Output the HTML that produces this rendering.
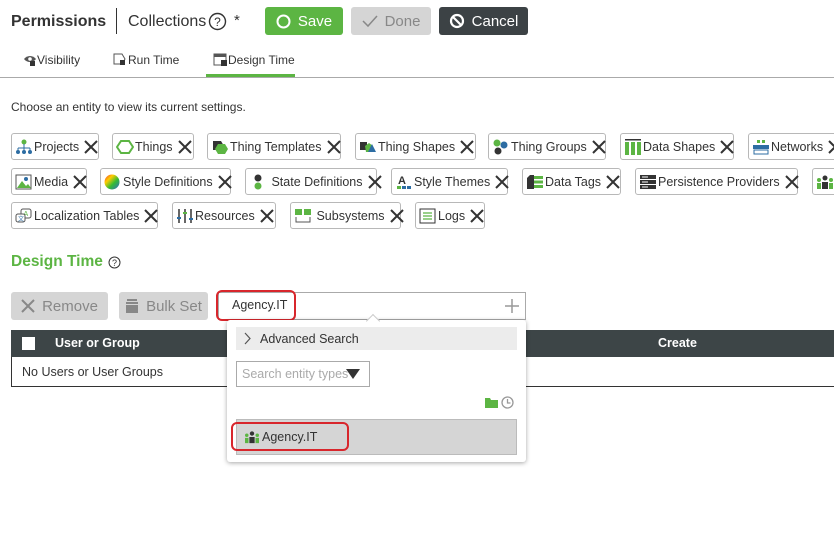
<!DOCTYPE html>
<html><head><meta charset="utf-8"><style>
*{box-sizing:border-box;margin:0;padding:0}
body{width:834px;height:556px;overflow:hidden;background:#fff;font-family:"Liberation Sans",sans-serif;color:#333;position:relative}
.a{position:absolute}
.btn{position:absolute;border-radius:3px;font-size:15px;display:flex;align-items:center;justify-content:center;gap:7px}
.chip{position:absolute;height:27px;border:1px solid #b8b8b8;border-radius:3px;font-size:12.5px;display:flex;align-items:center;padding-left:3px;gap:1px;color:#333;white-space:nowrap}
.chip .ic{width:18px;height:16px;display:inline-block;flex:none}
.chip .x{margin-left:4px;flex:none}
</style></head><body>
<div class="a" style="left:11px;top:13px;font-size:16px;font-weight:bold;color:#333">Permissions</div>
<div class="a" style="left:116px;top:8px;width:1px;height:26px;background:#333"></div>
<div class="a" style="left:128px;top:13px;font-size:16px;color:#333">Collections</div>
<svg class="a" style="left:208px;top:12px" width="19" height="19" viewBox="0 0 19 19"><circle cx="9.5" cy="9.5" r="8" fill="none" stroke="#333" stroke-width="1.4"/><text x="9.5" y="14" font-size="12" text-anchor="middle" font-family="Liberation Sans" fill="#333">?</text></svg>
<div class="a" style="left:234px;top:12px;font-size:15px">*</div>
<div class="btn" style="left:265px;top:7px;width:78px;height:28px;background:#5cb543;color:#fff"><svg width="15" height="15"><circle cx="7.5" cy="7.5" r="6" fill="none" stroke="#fff" stroke-width="2"/></svg>Save</div>
<div class="btn" style="left:351px;top:7px;width:80px;height:28px;background:#d5d5d5;color:#888"><svg width="16" height="14"><path d="M1 7l5 5 9-10" fill="none" stroke="#888" stroke-width="1.5"/></svg>Done</div>
<div class="btn" style="left:439px;top:7px;width:89px;height:28px;background:#3c4245;color:#fff"><svg width="16" height="16"><circle cx="8" cy="8" r="6" fill="none" stroke="#fff" stroke-width="2.2"/><path d="M4 4l8 8" stroke="#fff" stroke-width="2.2"/></svg>Cancel</div>
<svg class="a" style="left:23px;top:54px" width="14" height="12"><path d="M1 5c3-4 9-4 12 0c-3 4-9 4-12 0z" fill="#555"/><circle cx="7" cy="5" r="1.8" fill="#fff"/><rect x="7" y="7" width="5" height="5" fill="#333"/></svg>
<div class="a" style="left:37px;top:53px;font-size:12px">Visibility</div>
<svg class="a" style="left:113px;top:53px" width="14" height="13"><path d="M1 1h8l3 5-3 5H1z" fill="none" stroke="#555"/><rect x="7" y="7" width="5" height="5" fill="#333"/></svg>
<div class="a" style="left:128px;top:53px;font-size:12px">Run Time</div>
<svg class="a" style="left:213px;top:53px" width="15" height="13"><rect x="1" y="1" width="12" height="11" fill="none" stroke="#555"/><rect x="1" y="1" width="12" height="3" fill="#555"/><rect x="8" y="7" width="6" height="6" fill="#333"/></svg>
<div class="a" style="left:228px;top:53px;font-size:12px">Design Time</div>
<div class="a" style="left:206px;top:74px;width:89px;height:3px;background:#5cb543"></div>
<div class="a" style="left:0;top:77px;width:834px;height:1px;background:#aaa"></div>
<div class="a" style="left:11px;top:100px;font-size:12px">Choose an entity to view its current settings.</div>

<div class="chip" style="left:11px;top:133px;width:88px"><svg class="ic" viewBox="0 0 18 16"><circle cx="9" cy="3" r="2.5" fill="#5cb543"/><path d="M9 5v4M3 9h12M3 9v3M9 9v3M15 9v3" stroke="#2d6da3" fill="none"/><circle cx="3" cy="13" r="2" fill="#2d6da3"/><circle cx="9" cy="13" r="2" fill="#2d6da3"/><circle cx="15" cy="13" r="2" fill="#2d6da3"/></svg>Projects<svg class="x" width="14" height="14"><path d="M1 1l12 12M13 1L1 13" stroke="#333" stroke-width="2"/></svg></div>
<div class="chip" style="left:112px;top:133px;width:82px"><svg class="ic" viewBox="0 0 18 16"><path d="M5 2h8l4 6-4 6H5L1 8z" fill="none" stroke="#5cb543" stroke-width="2"/></svg>Things<svg class="x" width="14" height="14"><path d="M1 1l12 12M13 1L1 13" stroke="#333" stroke-width="2"/></svg></div>
<div class="chip" style="left:207px;top:133px;width:134px"><svg class="ic" viewBox="0 0 18 16"><path d="M2 2h8l3 5-3 4H2z" fill="#333"/><path d="M7 5h7l3 5-3 5H7l-3-5z" fill="#5cb543"/></svg>Thing Templates<svg class="x" width="14" height="14"><path d="M1 1l12 12M13 1L1 13" stroke="#333" stroke-width="2"/></svg></div>
<div class="chip" style="left:355px;top:133px;width:121px"><svg class="ic" viewBox="0 0 18 16"><rect x="1" y="3" width="7" height="8" fill="#333"/><path d="M6 7l4-3 4 3-1 6H7z" fill="#5cb543"/><path d="M13 5l4 8h-8z" fill="#2d6da3"/></svg>Thing Shapes<svg class="x" width="14" height="14"><path d="M1 1l12 12M13 1L1 13" stroke="#333" stroke-width="2"/></svg></div>
<div class="chip" style="left:488px;top:133px;width:118px"><svg class="ic" viewBox="0 0 18 16"><circle cx="5" cy="4" r="3.5" fill="#5cb543"/><circle cx="12" cy="6" r="3.5" fill="#2d6da3"/><circle cx="6" cy="12" r="3.5" fill="#333"/></svg>Thing Groups<svg class="x" width="14" height="14"><path d="M1 1l12 12M13 1L1 13" stroke="#333" stroke-width="2"/></svg></div>
<div class="chip" style="left:620px;top:133px;width:114px"><svg class="ic" viewBox="0 0 18 16"><rect x="1" y="0" width="16" height="1.5" fill="#333"/><rect x="1" y="3" width="4" height="13" fill="#5cb543"/><rect x="7" y="3" width="4" height="13" fill="#5cb543"/><rect x="13" y="3" width="4" height="13" fill="#5cb543"/></svg>Data Shapes<svg class="x" width="14" height="14"><path d="M1 1l12 12M13 1L1 13" stroke="#333" stroke-width="2"/></svg></div>
<div class="chip" style="left:748px;top:133px;width:100px"><svg class="ic" viewBox="0 0 18 16"><rect x="5" y="1" width="3" height="3" fill="#5cb543"/><rect x="10" y="1" width="3" height="3" fill="#5cb543"/><rect x="1" y="6" width="16" height="4" fill="#2d6da3"/><rect x="2" y="11" width="14" height="4" fill="none" stroke="#2d6da3"/></svg>Networks<svg class="x" width="14" height="14"><path d="M1 1l12 12M13 1L1 13" stroke="#333" stroke-width="2"/></svg></div>

<div class="chip" style="left:11px;top:168px;width:76px"><svg class="ic" viewBox="0 0 18 16"><rect x="1" y="1" width="15" height="14" fill="none" stroke="#555"/><circle cx="11" cy="5" r="2" fill="#2d6da3"/><path d="M2 14l5-7 4 5 2-2 3 4z" fill="#5cb543"/></svg>Media<svg class="x" width="14" height="14"><path d="M1 1l12 12M13 1L1 13" stroke="#333" stroke-width="2"/></svg></div>
<div class="chip" style="left:100px;top:168px;width:131px"><svg class="ic" viewBox="0 0 18 16"><defs><linearGradient id="cg" x1="0" y1="0" x2="1" y2="1"><stop offset="0" stop-color="#e33"/><stop offset=".3" stop-color="#fc0"/><stop offset=".6" stop-color="#3b3"/><stop offset="1" stop-color="#36c"/></linearGradient></defs><circle cx="8" cy="8" r="7.5" fill="url(#cg)"/></svg>Style Definitions<svg class="x" width="14" height="14"><path d="M1 1l12 12M13 1L1 13" stroke="#333" stroke-width="2"/></svg></div>
<div class="chip" style="left:245px;top:168px;width:132px"><svg class="ic" viewBox="0 0 18 16"><circle cx="9" cy="4" r="3.5" fill="#333"/><circle cx="9" cy="12" r="3.5" fill="#5cb543"/></svg>&nbsp;State Definitions<svg class="x" width="14" height="14"><path d="M1 1l12 12M13 1L1 13" stroke="#333" stroke-width="2"/></svg></div>
<div class="chip" style="left:391px;top:168px;width:117px"><svg class="ic" viewBox="0 0 18 16"><text x="3" y="10" font-size="11" font-weight="bold" font-family="Liberation Sans" fill="#333">A</text><rect x="2" y="12" width="4" height="3" fill="#5cb543"/><rect x="7" y="12" width="4" height="3" fill="#2d6da3"/><rect x="12" y="12" width="4" height="3" fill="#2d6da3"/></svg>Style Themes<svg class="x" width="14" height="14"><path d="M1 1l12 12M13 1L1 13" stroke="#333" stroke-width="2"/></svg></div>
<div class="chip" style="left:522px;top:168px;width:99px"><svg class="ic" viewBox="0 0 18 16"><path d="M1 4l3-3h4v14H1z" fill="#333"/><rect x="8" y="2" width="9" height="3" fill="#5cb543"/><rect x="8" y="6.5" width="9" height="3" fill="#5cb543"/><rect x="8" y="11" width="9" height="3" fill="#5cb543"/></svg>Data Tags<svg class="x" width="14" height="14"><path d="M1 1l12 12M13 1L1 13" stroke="#333" stroke-width="2"/></svg></div>
<div class="chip" style="left:635px;top:168px;width:163px"><svg class="ic" viewBox="0 0 18 16"><rect x="1" y="1" width="16" height="4" fill="#333"/><rect x="1" y="6" width="16" height="4" fill="#333"/><rect x="1" y="11" width="16" height="4" fill="#333"/><rect x="3" y="2.5" width="6" height="1" fill="#fff"/><rect x="3" y="7.5" width="6" height="1" fill="#fff"/><rect x="3" y="12.5" width="6" height="1" fill="#fff"/></svg>Persistence Providers<svg class="x" width="14" height="14"><path d="M1 1l12 12M13 1L1 13" stroke="#333" stroke-width="2"/></svg></div>
<div class="chip" style="left:812px;top:168px;width:60px"><svg class="ic" viewBox="0 0 18 16"><circle cx="3" cy="6" r="2" fill="#5cb543"/><circle cx="9" cy="4" r="2.5" fill="#333"/><circle cx="15" cy="6" r="2" fill="#5cb543"/><rect x="1" y="9" width="4" height="6" fill="#5cb543"/><rect x="6" y="8" width="6" height="7" fill="#333"/><rect x="13" y="9" width="4" height="6" fill="#5cb543"/></svg></div>

<div class="chip" style="left:11px;top:202px;width:147px"><svg class="ic" viewBox="0 0 18 16"><rect x="6" y="1" width="10" height="9" rx="2" fill="none" stroke="#555"/><text x="8.5" y="8" font-size="7" fill="#5cb543" font-family="Liberation Sans">A</text><rect x="1" y="6" width="9" height="8" rx="2" fill="#fff" stroke="#555"/><text x="3" y="13" font-size="6" fill="#2d6da3" font-family="Liberation Sans">文</text></svg>Localization Tables<svg class="x" width="14" height="14"><path d="M1 1l12 12M13 1L1 13" stroke="#333" stroke-width="2"/></svg></div>
<div class="chip" style="left:172px;top:202px;width:104px"><svg class="ic" viewBox="0 0 18 16"><path d="M3 1v14M9 1v14M15 1v14" stroke="#333" stroke-width="1.5"/><rect x="1" y="9" width="4" height="2" fill="#2d6da3"/><rect x="7" y="4" width="4" height="2" fill="#5cb543"/><rect x="13" y="10" width="4" height="2" fill="#2d6da3"/></svg>Resources<svg class="x" width="14" height="14"><path d="M1 1l12 12M13 1L1 13" stroke="#333" stroke-width="2"/></svg></div>
<div class="chip" style="left:290px;top:202px;width:111px"><svg class="ic" viewBox="0 0 18 16"><rect x="1" y="1" width="7" height="6" fill="#5cb543"/><rect x="10" y="1" width="7" height="6" fill="#5cb543"/><path d="M2 9v5h14V9" fill="none" stroke="#555"/></svg>&nbsp;Subsystems<svg class="x" width="14" height="14"><path d="M1 1l12 12M13 1L1 13" stroke="#333" stroke-width="2"/></svg></div>
<div class="chip" style="left:415px;top:202px;width:70px"><svg class="ic" viewBox="0 0 18 16"><rect x="1" y="1" width="15" height="14" fill="none" stroke="#333"/><path d="M4 5h9M4 8h9M4 11h9" stroke="#5cb543" stroke-width="1.3"/></svg>Logs<svg class="x" width="14" height="14"><path d="M1 1l12 12M13 1L1 13" stroke="#333" stroke-width="2"/></svg></div>

<div class="a" style="left:11px;top:253px;font-size:15.5px;font-weight:bold;color:#5cb543">Design Time</div>
<svg class="a" style="left:108px;top:256px" width="13" height="13"><circle cx="6.5" cy="6.5" r="5.5" fill="none" stroke="#333"/><text x="6.5" y="10" font-size="9" text-anchor="middle" font-family="Liberation Sans" fill="#333">?</text></svg>

<div class="btn" style="left:11px;top:292px;width:97px;height:28px;background:#d5d5d5;color:#888"><svg width="14" height="14"><path d="M1 1l12 12M13 1L1 13" stroke="#888" stroke-width="2"/></svg>Remove</div>
<div class="btn" style="left:119px;top:292px;width:89px;height:28px;background:#d5d5d5;color:#888"><svg width="14" height="14"><rect x="2" y="0" width="10" height="2" fill="#888"/><rect x="1" y="3" width="12" height="2" fill="#888"/><rect x="1" y="6" width="12" height="8" fill="#888"/></svg>Bulk Set</div>
<div class="a" style="left:218px;top:292px;width:308px;height:28px;border:1px solid #aaa;background:#fff"></div>
<div class="a" style="left:216px;top:290px;width:80px;height:31px;border:2px solid #d8262c;border-radius:6px"></div>
<div class="a" style="left:232px;top:298px;font-size:12.5px;color:#333">Agency.IT</div>
<svg class="a" style="left:505px;top:299px" width="14" height="14"><path d="M7 0v14M0 7h14" stroke="#999" stroke-width="1.5"/></svg>

<div class="a" style="left:11px;top:330px;width:823px;height:27px;background:#3d4547"></div>
<div class="a" style="left:22px;top:337px;width:13px;height:13px;background:#fff"></div>
<div class="a" style="left:55px;top:336px;font-size:12.5px;font-weight:bold;color:#fff">User or Group</div>
<div class="a" style="left:658px;top:336px;font-size:12.5px;font-weight:bold;color:#fff">Create</div>
<div class="a" style="left:11px;top:357px;width:830px;height:30px;border-left:1px solid #333;border-bottom:1px solid #333"></div>
<div class="a" style="left:22px;top:365px;font-size:12.5px">No Users or User Groups</div>

<div class="a" style="left:227px;top:320px;width:299px;height:142px;background:#fff;box-shadow:0 1px 5px rgba(0,0,0,.35);border-radius:3px"></div>
<div class="a" style="left:368px;top:316px;width:10px;height:10px;background:#fff;transform:rotate(45deg);border-left:1px solid #ccc;border-top:1px solid #ccc"></div>
<div class="a" style="left:236px;top:327px;width:281px;height:23px;background:#ececec"></div>
<svg class="a" style="left:244px;top:332px" width="8" height="13"><path d="M1 1l5 5.5L1 12" fill="none" stroke="#555" stroke-width="1.2"/></svg>
<div class="a" style="left:260px;top:332px;font-size:12.5px;color:#333">Advanced Search</div>
<div class="a" style="left:236px;top:361px;width:134px;height:26px;border:1px solid #aaa"></div>
<div class="a" style="left:242px;top:367px;font-size:12.5px;color:#aaa">Search entity types</div>
<svg class="a" style="left:346px;top:369px" width="14" height="10"><path d="M0 0h14L7 10z" fill="#333"/></svg>
<svg class="a" style="left:485px;top:397px" width="13" height="11"><path d="M0 1h5l1 2h7v8H0z" fill="#5cb543"/></svg>
<svg class="a" style="left:501px;top:396px" width="13" height="13"><circle cx="6.5" cy="6.5" r="5.5" fill="none" stroke="#999" stroke-width="1.3"/><path d="M6.5 3v4h3" fill="none" stroke="#999" stroke-width="1.3"/></svg>
<div class="a" style="left:236px;top:419px;width:281px;height:36px;background:#d5d5d5;border:1px solid #bbb"></div>
<div class="a" style="left:231px;top:422px;width:118px;height:29px;border:2px solid #d8262c;border-radius:6px"></div>
<svg class="a" style="left:243px;top:430px" width="18" height="14" viewBox="0 0 18 16"><circle cx="3" cy="6" r="2" fill="#5cb543"/><circle cx="9" cy="4" r="2.5" fill="#333"/><circle cx="15" cy="6" r="2" fill="#5cb543"/><rect x="1" y="9" width="4" height="6" fill="#5cb543"/><rect x="6" y="8" width="6" height="7" fill="#333"/><rect x="13" y="9" width="4" height="6" fill="#5cb543"/></svg>
<div class="a" style="left:262px;top:430px;font-size:12.5px;color:#333">Agency.IT</div>
</body></html>
